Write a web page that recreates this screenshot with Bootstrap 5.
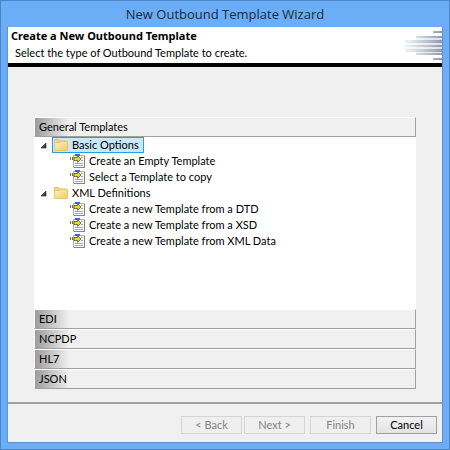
<!DOCTYPE html>
<html lang="en">
<head>
<meta charset="utf-8">
<meta name="viewport" content="width=device-width, initial-scale=1">
<title>New Outbound Template Wizard</title>
<link rel="stylesheet" href="https://cdn.jsdelivr.net/npm/bootstrap@5.3.0/dist/css/bootstrap.min.css">
<style>
  body { font-family: Lato, "Open Sans", sans-serif; font-size: 11px; line-height: 16px; color: #000; background: #6badf6; }
  button { font: inherit; color: inherit; }
  .wizard { border: 1px solid #4b86c6; padding: 0 6px 6px; }
  .window-title { font-family: "Open Sans", sans-serif; font-size: 13px; line-height: 26px; color: #1e2a3a; margin: 0; font-weight: 400; }
  .client { background: #f0f0f0; border: 1px solid #5a93d2; border-top: 0; }
  .banner { background: #fff; border-bottom: 4px solid #000; padding: 0 0 0 3px; }
  .banner h2 { font-family: "Noto Sans", "Open Sans", sans-serif; font-size: 11px; line-height: 18px; font-weight: 700; margin: 0; }
  .banner p { line-height: 16px; margin: 0; padding: 0 0 2px 4px; }
  .stage { padding: 50px 26px 13px; }
  .section-btn { border: 1px solid #a0a0a0; border-top-color: #fff; border-left-color: #fff; padding: 0 4px; height: 20px; line-height: 18px; background: linear-gradient(to right, #9c9c9c, #f0f0f0 34px); }
  .tree-pane { background: #fff; padding: 0 0 0 6px; }
  .tree-row { border: 0; background: none; padding: 0; height: 16px; white-space: nowrap; }
  .tree-label { border: 1px solid transparent; padding: 0 4px 0 0; gap: 3px; height: 16px; line-height: 14px; }
  .tree-label.selected { border-color: #26a0da; background: #cbe8f6; }
  .leaf { padding: 0 0 0 30px; gap: 3px; }
  .arrow-cell { width: 12px; }
  .footer-bar { border-top: 2px solid #a0a0a0; padding: 12px 5px 8px; gap: 5px; }
  .step-pair { gap: 2px; }
  .wiz-btn { width: 61px; height: 18px; font-size: 11px; line-height: 14px; padding: 0; border: 1px solid #a0a0a0; border-radius: 0; color: #000; background: linear-gradient(#f2f2f2, #e3e3e3); }
  .wiz-btn:disabled { color: #838383; border-color: #d5d5d5; background: #efefef; opacity: 1; }
  svg { display: block; flex: none; }
</style>
<script src="https://cdn.jsdelivr.net/npm/bootstrap@5.3.0/dist/js/bootstrap.bundle.min.js"></script>
</head>
<body>
<svg width="0" height="0" class="position-absolute" aria-hidden="true">
  <defs>
    <linearGradient id="fold" x1="0" y1="0" x2="1" y2="1"><stop offset="0" stop-color="#fff3b8"/><stop offset="1" stop-color="#efcb62"/></linearGradient>
    <linearGradient id="fade" gradientUnits="userSpaceOnUse" x1="0" y1="0" x2="40" y2="0"><stop offset="0" stop-color="#a8b4c4" stop-opacity=".1"/><stop offset="1" stop-color="#8c9aae"/></linearGradient>
    <symbol id="folder" viewBox="0 0 16 14">
      <path d="M1.500 12.500V1.500h4l1 1.500h7v3" fill="#f0d488" stroke="#e0c47c"/>
      <path d="M2 4.500h5l1-1h6.500v9H1.500V4.500z" fill="url(#fold)" stroke="#e4c878"/>
    </symbol>
    <symbol id="doc" viewBox="0 0 16 16">
      <path d="M3.500 2.500h11v12h-11z" fill="#fafafa" stroke="#b0b0b0"/>
      <path d="M14.500 3v12M4 14.500h11" stroke="#858585"/>
      <path d="M5 1h5v2H5z" fill="#2f6fd8"/>
      <path d="M11 4.500h2M11 7.500h2M5 10.500h8M5 12.500h8" stroke="#a4adb8"/>
      <path d="M0 4h1v3H0zM2 4h1v3H2z" fill="#77703c"/>
      <path d="M4 4.500h3.500V2.500l3.500 3.500L7.500 9.500V7.500H4z" fill="#e8d44c" stroke="#5f5620" stroke-width=".8"/>
    </symbol>
    <symbol id="arrow" viewBox="0 0 7 7"><path d="M6 1v5H1z" fill="#404040" stroke="#202020" stroke-width=".6"/></symbol>
  </defs>
</svg>
<main class="wizard d-flex flex-column min-vh-100">
  <h1 class="window-title text-center">New Outbound Template Wizard</h1>
  <div class="client flex-grow-1 d-flex flex-column">
    <header class="banner d-flex justify-content-between">
      <div>
        <h2>Create a New Outbound Template</h2>
        <p>Select the type of Outbound Template to create.</p>
      </div>
      <svg width="40" height="35" viewBox="0 0 40 35" aria-hidden="true" fill="url(#fade)">
        <path d="M31 4h9v2h-9zM14 9h26v2H14zM3 13h37v3H3zM3 18h37v2H3zM3 22h37v3H3zM14 26h26v2H14zM31 31h9v2h-9z"/>
        <path d="M14 11h26v2H14zM3 16h37v2H3zM3 20h37v2H3zM14 25h26v1H14z" opacity=".3"/>
      </svg>
    </header>
    <div class="stage flex-grow-1 d-flex flex-column">
      <button class="section-btn text-start" aria-expanded="true">General Templates</button>
      <ul class="tree-pane list-unstyled mb-0 flex-grow-1">
        <li>
          <button class="tree-row d-flex align-items-center"><span class="arrow-cell"><svg width="7" height="7"><use href="#arrow"/></svg></span><span class="tree-label selected d-flex align-items-center"><svg width="16" height="14"><use href="#folder"/></svg>Basic Options</span></button>
          <ul class="list-unstyled">
            <li><button class="tree-row leaf d-flex align-items-center"><svg width="16" height="16"><use href="#doc"/></svg>Create an Empty Template</button></li>
            <li><button class="tree-row leaf d-flex align-items-center"><svg width="16" height="16"><use href="#doc"/></svg>Select a Template to copy</button></li>
          </ul>
        </li>
        <li>
          <button class="tree-row d-flex align-items-center"><span class="arrow-cell"><svg width="7" height="7"><use href="#arrow"/></svg></span><span class="tree-label d-flex align-items-center"><svg width="16" height="14"><use href="#folder"/></svg>XML Definitions</span></button>
          <ul class="list-unstyled">
            <li><button class="tree-row leaf d-flex align-items-center"><svg width="16" height="16"><use href="#doc"/></svg>Create a new Template from a DTD</button></li>
            <li><button class="tree-row leaf d-flex align-items-center"><svg width="16" height="16"><use href="#doc"/></svg>Create a new Template from a XSD</button></li>
            <li><button class="tree-row leaf d-flex align-items-center"><svg width="16" height="16"><use href="#doc"/></svg>Create a new Template from XML Data</button></li>
          </ul>
        </li>
      </ul>
      <div class="d-flex flex-column">
        <button class="section-btn text-start">EDI</button>
        <button class="section-btn text-start">NCPDP</button>
        <button class="section-btn text-start">HL7</button>
        <button class="section-btn text-start">JSON</button>
      </div>
    </div>
    <footer class="footer-bar d-flex justify-content-end">
      <div class="step-pair d-flex">
        <button class="btn wiz-btn" disabled>&lt; Back</button>
        <button class="btn wiz-btn" disabled>Next &gt;</button>
      </div>
      <button class="btn wiz-btn" disabled>Finish</button>
      <button class="btn wiz-btn">Cancel</button>
    </footer>
  </div>
</main>
</body>
</html>
